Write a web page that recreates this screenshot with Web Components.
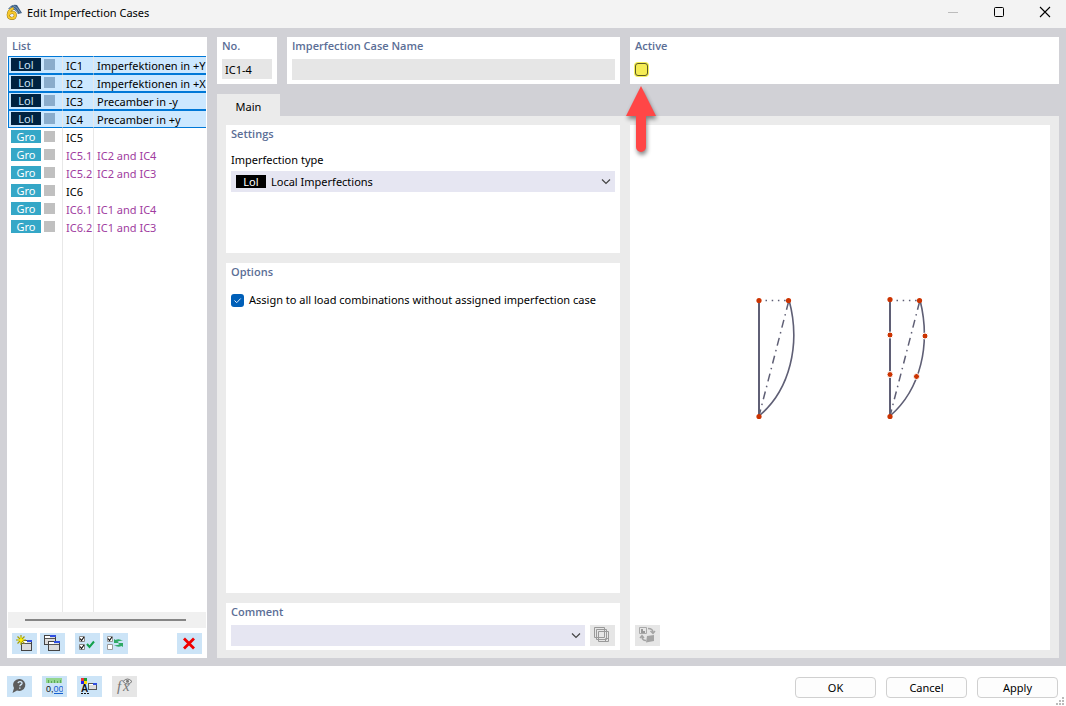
<!DOCTYPE html>
<html lang="en">
<head>
<meta charset="utf-8">
<meta name="viewport" content="width=device-width, initial-scale=1">
<title>Edit Imperfection Cases</title>
<style>
html, body { margin: 0; height: 100%; }
body { font: 11px/16px "Noto Sans", "Open Sans", sans-serif; color: #000; background: #fff; }
</style>
</head>
<body>
<edit-dialog></edit-dialog>
<script>
const define = (name, html, setup) => {
  const template = document.createElement('template');
  template.innerHTML = '<style>*{box-sizing:border-box}</style>' + html;
  customElements.define(name, class extends HTMLElement {
    constructor() {
      super();
      this.attachShadow({ mode: 'open' }).append(template.content.cloneNode(true));
    }
    connectedCallback() { if (setup) setup(this, this.shadowRoot); }
  });
};

/* Window caption with its three system buttons */
define('title-bar', `
<style>
:host { display: flex; align-items: center; height: 28px; background: #f3f3f3; padding-left: 6px; flex: none; }
h1 { font: inherit; margin: 0 auto 0 5px; line-height: 16px; padding-bottom: 2px; }
.logo { margin-bottom: 4px; }
button { width: 46px; height: 28px; border: 0; background: none; padding: 0 0 4px 4px; display: grid; place-items: center; }
</style>
<svg class="logo" width="16" height="16" viewBox="0 0 16 16" aria-hidden="true">
  <path d="M2 5Q6-.5 11 1l5 8-4 1Q9 4 2 5z" fill="#3d5f86"/>
  <path d="M3 4q5-3 9 5M7 1.500q4 1 7 7" fill="none" stroke="#9ab4cb" stroke-width=".7"/>
  <path d="M7.500 4.300C3.800 5.800 2.200 8 2.200 10.800c0 2.200 1.300 3.600 3.500 3.600 2.100 0 3.600-1.300 3.600-3.200 0-1.700-1.100-2.800-2.900-2.800-1.700 0-3.300 1-4 2.200" fill="none" stroke="#8a6d10" stroke-width="3"/>
  <path d="M7.500 4.300C3.800 5.800 2.200 8 2.200 10.800c0 2.200 1.300 3.600 3.500 3.600 2.100 0 3.600-1.300 3.600-3.200 0-1.700-1.100-2.800-2.900-2.800-1.700 0-3.300 1-4 2.200" fill="none" stroke="#f7c92e" stroke-width="2.100"/>
</svg>
<h1><slot></slot></h1>
<button aria-label="Minimize" disabled><svg width="12" height="12"><path d="M1 6.500h10" stroke="#bcbcbc"/></svg></button>
<button aria-label="Maximize"><svg width="12" height="12"><rect x="1.500" y="1.500" width="9" height="9" rx="1" fill="none" stroke="#000"/></svg></button>
<button aria-label="Close"><svg width="12" height="12"><path d="M1 1l10 10M11 1L1 11" stroke="#000" stroke-width="1.100"/></svg></button>
`);

/* White card with a coloured heading */
define('ui-card', `
<style>
:host { display: flex; flex-direction: column; background: #fff; padding: 1px 5px 4px; min-width: 0; }
header { font-family: "Open Sans", sans-serif; font-weight: 600; color: #5b6e96; line-height: 16px; height: 16px; white-space: nowrap; flex: none; }
:host([flush]) { padding: 1px 1px 4px; }
:host([flush]) header { padding-left: 4px; }
</style>
<header><slot name="heading"></slot></header>
<slot></slot>
`);

/* Tool button; holds a 17px icon */
define('icon-button', `
<style>
:host { display: block; width: 25px; height: 21px; flex: none; }
button { display: grid; place-items: center; width: 100%; height: 100%; border: 0; padding: 0; background: #cce4f7; }
:host([inactive]) button { background: #e6e6e6; }
</style>
<button><slot></slot></button>
`, (host, root) => {
  const button = root.querySelector('button');
  button.setAttribute('aria-label', host.getAttribute('label'));
  button.disabled = host.hasAttribute('inactive');
});

define('push-button', `
<style>
:host { display: block; width: 81px; height: 21px; }
button { width: 100%; height: 100%; font: inherit; line-height: 16px; color: #000; background: #fdfdfd; border: 1px solid #d0d0d0; border-radius: 4px; padding: 0; }
</style>
<button><slot></slot></button>
`);

/* Short type tag of an imperfection case */
define('type-badge', `
<style>
:host { display: inline-block; width: 30px; height: 13px; line-height: 13px; text-align: center; color: #fff; background: #000; overflow: hidden; }
:host([kind="local"]) { background: #002240; color: #cce4f7; }
:host([kind="group"]) { background: #35a7c7; }
</style>
<slot></slot>
`);

define('case-list', `
<style>
:host { display: flex; flex-direction: column; flex: 1; min-height: 0; }
.rows { flex: 1; margin-top: 2px; overflow: hidden;
  background: linear-gradient(#e8e8e8, #e8e8e8) 54px 0 / 1px 100% no-repeat, linear-gradient(#e8e8e8, #e8e8e8) 85px 0 / 1px 100% no-repeat; }
table { width: 100%; table-layout: fixed; border-collapse: separate; border-spacing: 0; }
col.type { width: 55px; } col.no { width: 31px; }
td { height: 18px; padding: 2px 0 0 3px; line-height: 16px; vertical-align: top; white-space: nowrap; overflow: hidden; border-right: 1px solid #e8e8e8; }
td:last-child { border-right: 0; }
tr[aria-selected="true"] td { background: #cce8ff; border-top: 1px solid #0078d7; border-bottom: 1px solid #0078d7; padding-top: 1px; line-height: 15px; }
tr[aria-selected="true"] td:first-child { border-left: 1px solid #0078d7; padding-left: 2px; }
.tag { display: flex; gap: 3px; height: 15px; }
.swatch { width: 11px; height: 11px; margin-top: 1px; background: #c0c0c0; }
tr[aria-selected="true"] .swatch { background: #8aaccb; }
.sub { color: #a03ca0; }
.scroll { height: 16px; background: #f0f0f0; display: flex; align-items: center; padding: 0 20px 0 17px; flex: none; }
.scroll i { flex: 1; height: 2px; background: #858585; }
</style>
<div class="rows"><table aria-label="Imperfection cases"><colgroup><col class="type"><col class="no"><col></colgroup><tbody></tbody></table></div>
<div class="scroll"><i></i></div>
`, (host, root) => {
  const cases = [
    ['Lol', 'IC1', 'Imperfektionen in +Y'], ['Lol', 'IC2', 'Imperfektionen in +X'],
    ['Lol', 'IC3', 'Precamber in -y'], ['Lol', 'IC4', 'Precamber in +y'],
    ['Gro', 'IC5', ''], ['Gro', 'IC5.1', 'IC2 and IC4'], ['Gro', 'IC5.2', 'IC2 and IC3'],
    ['Gro', 'IC6', ''], ['Gro', 'IC6.1', 'IC1 and IC4'], ['Gro', 'IC6.2', 'IC1 and IC3']
  ];
  root.querySelector('tbody').innerHTML = cases.map(([type, no, name]) => `
    <tr aria-selected="${type === 'Lol'}" class="${no.includes('.') ? 'sub' : ''}">
      <td><div class="tag"><type-badge kind="${type === 'Lol' ? 'local' : 'group'}">${type}</type-badge><span class="swatch"></span></div></td>
      <td>${no}</td><td>${name}</td></tr>`).join('');
});

/* Sketch of a local bow imperfection: single span and segmented member */
define('imperfection-sketch', `
<style>
:host { display: grid; place-items: center; flex: 1; }
</style>
<svg width="184" height="180" viewBox="748 285 184 180" role="img" aria-label="Local imperfection of a member">
  <g fill="none" stroke="#5f5f75">
    <path d="M759 300V416M890 300V416" stroke-width="2"/>
    <path d="M789 300C801 344 790 390 759 416M920 300C931 344 921 389 890 416" stroke-width="1.600"/>
    <path d="M788.500 302L759 416M919.500 302L890 416" stroke-width="1.500" stroke-dasharray="8 4.500 1.500 4.500"/>
    <path d="M765.500 300.500H787M896.500 300.500H918" stroke-width="1.400" stroke-dasharray="1.500 4.700"/>
  </g>
  <g fill="#cc3300">
    <circle cx="759" cy="300.500" r="2.600"/><circle cx="788.500" cy="300.500" r="2.600"/><circle cx="759" cy="416.500" r="2.600"/>
    <circle cx="890" cy="299.500" r="2.600"/><circle cx="919.500" cy="300.500" r="2.600"/><circle cx="890" cy="416.500" r="2.600"/>
  </g>
  <g fill="#cc3300" stroke="#fff">
    <circle cx="890" cy="335" r="3"/><circle cx="890" cy="374.500" r="3"/><circle cx="925" cy="336" r="3"/><circle cx="916.500" cy="376.500" r="3"/>
  </g>
</svg>
`);

define('edit-dialog', `
<style>
:host { display: flex; flex-direction: column; height: 100%; }
.body { flex: 1; min-height: 0; display: flex; gap: 10px; padding: 9px 7px 8px; background: #d1d1d6; }
.list { width: 200px; flex: none; }
.tools { display: flex; gap: 3px; padding: 5px 4px 0; }
.tools .gap { margin-left: 7px; }
.tools .end { margin-left: auto; }
.content { flex: 1; min-width: 0; display: flex; flex-direction: column; }
.top { display: grid; grid-template-columns: 60px minmax(0, 333fr) minmax(0, 429fr); gap: 10px; height: 47px; flex: none; }
input[type=text] { width: 100%; height: 21px; margin-top: 5px; border: 0; padding: 1px 3px 0; background: #e6e6e6; font: inherit; color: #000; }
input#no { height: 20px; }
.active { position: relative; }
.active input { appearance: none; display: block; width: 13px; height: 13px; margin: 9px 0 0; border: 1px solid #5c5a26; border-radius: 3px; background: #f5ec55; box-shadow: 0 0 0 1px #f5f05a; }
.arrow { position: absolute; left: -9px; top: 47px; z-index: 2; overflow: visible; filter: drop-shadow(1px 3px 2px #0007); }
.tabs { display: flex; margin-top: 10px; flex: none; }
.tabs button { width: 63px; height: 22px; border: 0; padding: 3px 0 0; background: #ebebeb; font: inherit; line-height: 16px; color: #000; }
.page { flex: 1; min-height: 0; background: #ebebeb; padding: 9px 9px 8px; display: grid; grid-template-columns: minmax(0, 394fr) minmax(0, 420fr); gap: 10px; }
.forms { display: grid; grid-template-rows: 128px minmax(0, 1fr) 47px; gap: 10px; }
.row { display: flex; gap: 5px; margin-top: 5px; }
.field { margin-top: 10px; line-height: 16px; }
.combo { position: relative; flex: 1; min-width: 0; display: grid; }
.combo select { appearance: none; width: 100%; height: 21px; border: 0; border-radius: 0; background: #e6e6f2; font: inherit; color: #000; padding: 0 24px 0 40px; }
.combo type-badge { position: absolute; left: 5px; top: 4px; pointer-events: none; }
.combo svg { position: absolute; right: 4px; top: 7px; pointer-events: none; }
.type { margin-top: 3px; }
.check { display: flex; align-items: center; gap: 5px; margin-top: 12px; line-height: 16px; white-space: nowrap; }
.check span { display: grid; }
.check span > * { grid-area: 1 / 1; }
.check input { appearance: none; width: 13px; height: 13px; margin: 0; border-radius: 3px; background: #005fb8; }
.preview { background: #fff; display: flex; flex-direction: column; padding: 0 5px 4px; }
footer { position: relative; display: flex; align-items: flex-start; gap: 10px; height: 40px; padding: 10px 8px 0 7px; background: #fff; flex: none; }
footer push-button { margin-top: 1px; }
footer .end { margin-left: auto; }
.grip { position: absolute; right: 1px; bottom: 0; }
</style>
<title-bar>Edit Imperfection Cases</title-bar>
<main class="body">
  <ui-card class="list" flush>
    <span slot="heading">List</span>
    <case-list></case-list>
    <div class="tools">
      <icon-button label="New case"><svg width="17" height="17"><rect x="5.500" y="5.500" width="10" height="10" fill="#dcdcdc" stroke="#444"/><path d="M6 6h5v2H6z" fill="#fff"/><path d="M11 5h5v2h-5z" fill="#2f4fe0"/><path d="M6 8.500h9" stroke="#555"/><path d="M5 0v10M0 5h10M1.500 1.500l7 7M8.500 1.500l-7 7" stroke="#a8a000" stroke-width="1.200"/><path d="M5 1.500L6 4l2.500 1L6 6 5 8.500 4 6 1.500 5 4 4z" fill="#ffee00"/></svg></icon-button>
      <icon-button label="Copy case"><svg width="17" height="17"><rect x=".5" y=".5" width="11" height="9" fill="#dcdcdc" stroke="#444"/><path d="M1 1h5v2H1z" fill="#fff"/><path d="M6 0h6v2H6z" fill="#2f4fe0"/><path d="M1 3.500h10" stroke="#555"/><rect x="4.500" y="6.500" width="11" height="9" fill="#dcdcdc" stroke="#444"/><path d="M5 7h5v2H5z" fill="#fff"/><path d="M10 6h6v2h-6z" fill="#2f4fe0"/><path d="M5 9.500h10" stroke="#555"/></svg></icon-button>
      <icon-button class="gap" label="Select all"><svg width="17" height="17"><path d="M.5 1.500h5v5h-5zM.5 9.500h5v5h-5z" fill="#fff" stroke="#888"/><path d="M1 3.500L2.500 5.500 5 2M1 11.500l1.500 2L5 10" fill="none" stroke="#111" stroke-width="1.200"/><path d="M8 9l2.500 3L15 6.500" fill="none" stroke="#12a14b" stroke-width="2"/></svg></icon-button>
      <icon-button label="Invert selection"><svg width="17" height="17"><path d="M.5 1.500h5v5h-5zM.5 9.500h5v5h-5z" fill="#fff" stroke="#999"/><path d="M1 3.500L2.500 5.500 5 2" fill="none" stroke="#111" stroke-width="1.200"/><path d="M7 8V4l1.500 1Q12 3 16 6q-3-.5-5.500.7L12 8zM16 8v4l-1.500-1Q11 13 7 10q3 .5 5.500-.7L11 8z" fill="#2fa965"/></svg></icon-button>
      <icon-button class="end" label="Delete"><svg width="17" height="17"><path d="M3 3.500l10 10M13 3.500l-10 10" stroke="#f00000" stroke-width="2.800"/></svg></icon-button>
    </div>
  </ui-card>
  <section class="content">
    <div class="top">
      <ui-card><label slot="heading" for="no">No.</label><input type="text" id="no" value="IC1-4" readonly></ui-card>
      <ui-card><label slot="heading" for="name">Imperfection Case Name</label><input type="text" id="name"></ui-card>
      <ui-card class="active"><label slot="heading" for="active">Active</label><input type="checkbox" id="active">
        <svg class="arrow" width="40" height="72" aria-hidden="true"><path d="M20 2l15 30H25v31a5 5 0 0 1-10 0V32H5z" fill="#ff4646"/></svg>
      </ui-card>
    </div>
    <div class="tabs" role="tablist"><button role="tab" aria-selected="true">Main</button></div>
    <div class="page">
      <div class="forms">
        <ui-card>
          <span slot="heading">Settings</span>
          <label class="field" for="type">Imperfection type</label>
          <div class="row type"><div class="combo">
            <select id="type"><option>Local Imperfections</option></select>
            <type-badge>Lol</type-badge>
            <svg width="10" height="7"><path d="M1 1.500l4 4 4-4" fill="none" stroke="#444" stroke-width="1.200"/></svg>
          </div></div>
        </ui-card>
        <ui-card>
          <span slot="heading">Options</span>
          <label class="check"><span><input type="checkbox" checked><svg width="13" height="13" aria-hidden="true"><path d="M3.500 6.500l2.200 2.200 4-4.200" fill="none" stroke="#e0efff"/></svg></span>Assign to all load combinations without assigned imperfection case</label>
        </ui-card>
        <ui-card>
          <label slot="heading" for="comment">Comment</label>
          <div class="row"><div class="combo">
            <select id="comment"><option></option></select>
            <svg width="10" height="7"><path d="M1 1.500l4 4 4-4" fill="none" stroke="#444" stroke-width="1.200"/></svg>
          </div>
          <icon-button label="Comment templates" inactive><svg width="17" height="17"><g fill="#e6e6e6" stroke="#999"><path d="M.5.5h10v10H.5zM2.500 2.500h10v10h-10zM4.500 4.500h10v10h-10z"/><path d="M11.500 14.500v-3h3" fill="none"/></g></svg></icon-button></div>
        </ui-card>
      </div>
      <div class="preview">
        <imperfection-sketch></imperfection-sketch>
        <icon-button label="Switch picture" inactive><svg width="17" height="17"><path d="M.5.500h7v6h-7z" fill="none" stroke="#aaa"/><path d="M2 2h2v2h2v2H2z" fill="#999"/><path d="M8 9l7-1v6l-8 1.500z" fill="#a4a4a4"/><path d="M9 1.500q5 0 5 4M11.500 4l2.500 2.500L16 4M7 13.500q-4 0-4-4M1 11l2-2.500L5 11" fill="none" stroke="#a4a4a4" stroke-width="1.400"/></svg></icon-button>
      </div>
    </div>
  </section>
</main>
<footer>
  <icon-button label="Help"><svg width="17" height="17"><path d="M9 1a6 6 0 1 1-3 11.500L1.500 15 3 10A6 6 0 0 1 9 1z" fill="#5c5c5c"/><path d="M7 5.200q.3-1.700 2.200-1.600 2 .2 1.800 1.800-.2 1-1.500 1.600-.6.400-.6 1.300M8.800 9.400v1.400" fill="none" stroke="#d4e8f8" stroke-width="1.400"/></svg></icon-button>
  <icon-button label="Units and decimal places"><svg width="17" height="17"><path d="M0 0h16v5H0z" fill="#93d58f"/><path d="M2.500 2v3M5.500 3v2M8.500 2v3M11.500 3v2M14.500 2v3" stroke="#5aa858"/><text x="0" y="14" font-size="9" fill="#111">0,<tspan fill="#1560d0">00</tspan></text><path d="M8 15.500h9" stroke="#1560d0"/></svg></icon-button>
  <icon-button label="Display properties"><svg width="17" height="17"><path d="M0 0h3v3H0z" fill="#e33"/><path d="M3 0h3v3H3z" fill="#1c9c30"/><path d="M0 3h3v3H0z" fill="#22e"/><path d="M3 3h3v3H3z" fill="#fd0"/><text x="0" y="14" font-size="10" font-weight="600" fill="#111">A</text><path d="M0 15.500h8" stroke="#111" stroke-dasharray="2 1"/><rect x="7.500" y="5.500" width="8" height="6" fill="#dcdcdc" stroke="#555"/><path d="M8 6h4v1H8z" fill="#fff"/><path d="M12 5h4v2h-4z" fill="#2f4fe0"/></svg></icon-button>
  <icon-button label="Formula" inactive><svg width="17" height="17"><text x="1" y="13" font-family="Liberation Serif, serif" font-style="italic" font-size="15" fill="#777">f<tspan x="7">x</tspan></text><path d="M7 3.500q4.500-5 9 0-4.500 5-9 0z" fill="#e6e6e6" stroke="#777"/><circle cx="11.500" cy="3.300" r="1.500" fill="#777"/></svg></icon-button>
  <push-button class="end">OK</push-button>
  <push-button>Cancel</push-button>
  <push-button>Apply</push-button>
  <svg class="grip" width="9" height="9" aria-hidden="true"><path d="M6 0h2v2H6zM3 3h2v2H3zM6 3h2v2H6zM0 6h2v2H0zM3 6h2v2H3zM6 6h2v2H6z" fill="#bbb"/></svg>
</footer>
`);
</script>
</body>
</html>
